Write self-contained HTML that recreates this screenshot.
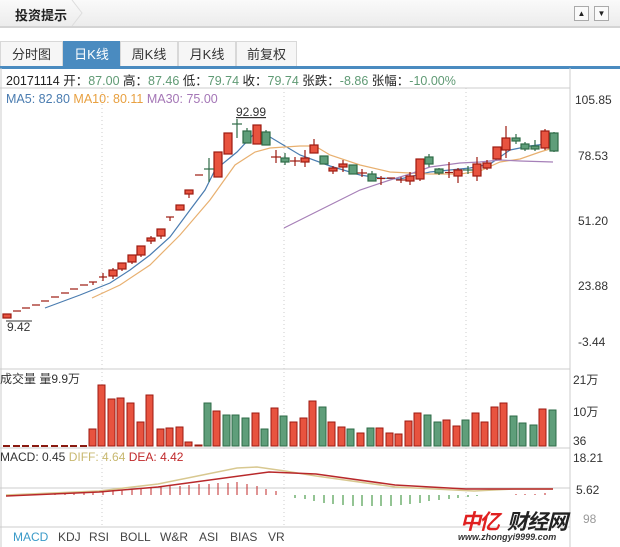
<!DOCTYPE html>
<html><head><meta charset="utf-8"><style>
body{margin:0;width:620px;height:547px;background:#fff;position:relative;overflow:hidden;font-family:"Liberation Sans","Noto Sans CJK SC",sans-serif;}
.hdr{position:absolute;left:0;top:0;width:620px;height:26px;background:linear-gradient(#fafafa,#ececec);border-bottom:2px solid #d4d4d4;}
.hdr b{position:absolute;left:15px;top:5px;font-size:13px;color:#222;}
.btn{position:absolute;top:6px;width:13px;height:13px;border:1px solid #aaa;background:#fafafa;font-size:8px;line-height:13px;text-align:center;color:#222;}
.tab{position:absolute;top:41px;height:25px;border:1px solid #d8d8d8;border-bottom:none;background:#f6f6f6;font-size:13px;color:#333;text-align:center;line-height:25px;box-sizing:border-box;}
.tab.on{background:#4a8bc0;color:#fff;border-color:#4a8bc0;}
.t{position:absolute;font-size:12.5px;white-space:nowrap;}
</style></head><body>
<div class="hdr"><b>投资提示</b>
<svg style="position:absolute;left:70px;top:0" width="14" height="26"><polyline points="2,0 12,13 2,26" fill="none" stroke="#ddd"/></svg>
<div class="btn" style="left:574px">▲</div><div class="btn" style="left:594px">▼</div></div>
<div class="tab" style="left:0;width:63px">分时图</div>
<div class="tab on" style="left:63px;width:57px">日K线</div>
<div class="tab" style="left:120px;width:58px">周K线</div>
<div class="tab" style="left:178px;width:58px">月K线</div>
<div class="tab" style="left:236px;width:61px">前复权</div>
<div style="position:absolute;left:0;top:66px;width:620px;height:3px;background:#4a8bc0"></div>
<div class="t" style="left:6px;top:70px;color:#222">20171114 开：<span style="color:#5f9a74">87.00</span> 高：<span style="color:#5f9a74">87.46</span> 低：<span style="color:#5f9a74">79.74</span> 收：<span style="color:#5f9a74">79.74</span> 张跌：<span style="color:#5f9a74">-8.86</span> 张幅：<span style="color:#5f9a74">-10.00%</span></div>
<div class="t" style="left:6px;top:92px;"><span style="color:#4a7cb0">MA5: 82.80</span> <span style="color:#e8a040">MA10: 80.11</span> <span style="color:#a476b6">MA30: 75.00</span></div>
<svg style="position:absolute;left:0;top:0" width="620" height="547">
<g stroke="#ccc" fill="none">
<line x1="1" y1="68" x2="1" y2="547"/><line x1="570" y1="68" x2="570" y2="547"/>
<line x1="0" y1="88" x2="570" y2="88"/><line x1="0" y1="369" x2="570" y2="369"/>
<line x1="0" y1="448" x2="570" y2="448"/><line x1="0" y1="488" x2="570" y2="488"/>
<line x1="0" y1="527" x2="570" y2="527"/>
<g stroke-dasharray="1,3"><line x1="102" y1="88" x2="102" y2="527"/><line x1="284" y1="88" x2="284" y2="527"/><line x1="466" y1="88" x2="466" y2="527"/></g>
</g>
<g font-size="12" fill="#333" font-family="Liberation Sans,Noto Sans CJK SC,sans-serif">
<text x="575" y="104">105.85</text><text x="578" y="160">78.53</text><text x="578" y="225">51.20</text><text x="578" y="290">23.88</text><text x="578" y="346">-3.44</text>
<text x="573" y="384">21万</text><text x="573" y="416">10万</text><text x="573" y="445">36</text>
<text x="573" y="462">18.21</text><text x="576" y="494">5.62</text><text x="583" y="523" fill="#999">98</text>
<text x="0" y="383">成交量 量9.9万</text>
<text x="0" y="461">MACD: 0.45 <tspan fill="#c8b870">DIFF: 4.64</tspan> <tspan fill="#c0282a">DEA: 4.42</tspan></text>
<text x="236" y="116" text-decoration="underline">92.99</text><text x="7" y="331">9.42</text>
<line x1="6" y1="321" x2="32" y2="321" stroke="#333"/>
</g>
<polyline fill="none" stroke="#4a7cb0" stroke-width="1.2" points="45,308 80,295 110,283 130,270 150,255 170,237 190,210 205,190 215,170 237,152 253,135 265,134 275,140 300,155 330,166 360,175 380,178 400,179 430,172 470,168 490,164 510,150 530,146 553,143"/>
<polyline fill="none" stroke="#e8b070" stroke-width="1.2" points="92,298 120,285 150,265 180,235 210,200 235,165 255,152 270,148 300,146 315,146 330,155 360,165 390,172 410,173 430,174 460,174 480,171 500,162 520,159 540,152 553,148"/>
<polyline fill="none" stroke="#a680b8" stroke-width="1.2" points="284,228 300,220 330,205 360,190 390,180 410,174 430,167 460,163 480,162 500,160 520,161 553,162"/>
<g stroke-width="1.2">
<g stroke="#9c1a10" fill="#e8533f">
<rect x="3" y="314" width="8" height="4"/>
<line x1="13" y1="311" x2="21" y2="311"/><line x1="22" y1="308" x2="30" y2="308"/><line x1="32" y1="305" x2="40" y2="305"/><line x1="41" y1="301" x2="49" y2="301"/><line x1="51" y1="297" x2="59" y2="297"/><line x1="61" y1="293" x2="69" y2="293"/><line x1="70" y1="289" x2="78" y2="289"/><line x1="80" y1="285" x2="88" y2="285"/>
<line x1="89" y1="282" x2="97" y2="282"/><line x1="93" y1="282" x2="93" y2="285"/>
<line x1="99" y1="277" x2="107" y2="277"/><line x1="103" y1="273" x2="103" y2="281"/>
<line x1="113" y1="268" x2="113" y2="279"/><rect x="109" y="270" width="8" height="6"/>
<line x1="122" y1="263" x2="122" y2="271"/><rect x="118" y="263" width="8" height="6"/>
<line x1="132" y1="255" x2="132" y2="264"/><rect x="128" y="255" width="8" height="7"/>
<line x1="141" y1="246" x2="141" y2="257"/><rect x="137" y="246" width="8" height="9"/>
<line x1="151" y1="236" x2="151" y2="244"/><rect x="147" y="238" width="8" height="3"/>
<line x1="161" y1="229" x2="161" y2="239"/><rect x="157" y="229" width="8" height="7"/>
<line x1="166" y1="217" x2="174" y2="217"/><line x1="170" y1="217" x2="170" y2="221"/>
<rect x="176" y="205" width="8" height="5"/>
<line x1="189" y1="190" x2="189" y2="198"/><rect x="185" y="190" width="8" height="4"/>
<line x1="195" y1="175" x2="203" y2="175"/>
<rect x="214" y="152" width="8" height="25"/><rect x="224" y="133" width="8" height="21"/>
<rect x="253" y="125" width="8" height="19"/>
<line x1="276" y1="150" x2="276" y2="163"/><line x1="271" y1="157" x2="281" y2="157"/>
<line x1="295" y1="157" x2="295" y2="166"/><line x1="290" y1="161" x2="300" y2="161"/>
<line x1="305" y1="150" x2="305" y2="167"/><rect x="301" y="158" width="8" height="4"/>
<line x1="314" y1="139" x2="314" y2="153"/><rect x="310" y="145" width="8" height="8"/>
<line x1="333" y1="166" x2="333" y2="174"/><rect x="329" y="168" width="8" height="3"/>
<line x1="343" y1="160" x2="343" y2="172"/><rect x="339" y="164" width="8" height="3"/>
<line x1="362" y1="169" x2="362" y2="177"/><line x1="357" y1="173" x2="367" y2="173"/>
<line x1="381" y1="176" x2="381" y2="185"/><line x1="377" y1="178.5" x2="385" y2="178.5"/>
<line x1="387" y1="178" x2="395" y2="178"/>
<line x1="401" y1="177" x2="401" y2="183"/><line x1="396" y1="180" x2="406" y2="180"/>
<line x1="410" y1="172" x2="410" y2="185"/><rect x="406" y="176" width="8" height="5"/>
<line x1="420" y1="159" x2="420" y2="181"/><rect x="416" y="159" width="8" height="20"/>
<line x1="449" y1="162" x2="449" y2="178"/><line x1="445" y1="172.5" x2="453" y2="172.5"/>
<line x1="458" y1="168" x2="458" y2="183"/><rect x="454" y="170" width="8" height="6"/>
<line x1="477" y1="157" x2="477" y2="181"/><rect x="473" y="164" width="8" height="12"/>
<line x1="487" y1="160" x2="487" y2="170"/><rect x="483" y="163" width="8" height="5"/>
<rect x="493" y="147" width="8" height="12"/>
<line x1="506" y1="126" x2="506" y2="158"/><rect x="502" y="138" width="8" height="12"/>
<line x1="545" y1="129" x2="545" y2="150"/><rect x="541" y="131" width="8" height="17"/>
</g>
<g stroke="#2e6b47" fill="#5f9e7a">
<line x1="209" y1="158" x2="209" y2="182"/><line x1="204" y1="169" x2="214" y2="169"/>
<line x1="237" y1="119" x2="237" y2="138"/><line x1="232" y1="124" x2="242" y2="124"/>
<line x1="247" y1="128" x2="247" y2="143"/><rect x="243" y="131" width="8" height="12"/>
<line x1="266" y1="130" x2="266" y2="145"/><rect x="262" y="132" width="8" height="13"/>
<line x1="285" y1="153" x2="285" y2="165"/><rect x="281" y="158" width="8" height="4"/>
<rect x="320" y="156" width="8" height="8"/>
<rect x="349" y="165" width="8" height="9"/>
<line x1="372" y1="171" x2="372" y2="181"/><rect x="368" y="174" width="8" height="7"/>
<line x1="429" y1="154" x2="429" y2="167"/><rect x="425" y="157" width="8" height="7"/>
<line x1="439" y1="168" x2="439" y2="175"/><rect x="435" y="169" width="8" height="4"/>
<line x1="468" y1="166" x2="468" y2="174"/><line x1="463" y1="170" x2="473" y2="170"/>
<line x1="516" y1="134" x2="516" y2="144"/><rect x="512" y="138" width="8" height="3"/>
<line x1="525" y1="142" x2="525" y2="151"/><rect x="521" y="144" width="8" height="5"/>
<line x1="535" y1="140" x2="535" y2="151"/><rect x="531" y="146" width="8" height="3"/>
<line x1="554" y1="132" x2="554" y2="152"/><rect x="550" y="133" width="8" height="18"/>
</g>
</g>
<g stroke="#8a1a10" stroke-width="2"><line x1="3" y1="446" x2="10" y2="446"/><line x1="13" y1="446" x2="20" y2="446"/><line x1="22" y1="446" x2="29" y2="446"/><line x1="32" y1="446" x2="39" y2="446"/><line x1="41" y1="446" x2="48" y2="446"/><line x1="51" y1="446" x2="58" y2="446"/><line x1="61" y1="446" x2="68" y2="446"/><line x1="70" y1="446" x2="77" y2="446"/><line x1="80" y1="446" x2="87" y2="446"/></g>
<g stroke-width="1">
<g fill="#e8533f" stroke="#9c1a10">
<rect x="89" y="429" width="7" height="17"/><rect x="98" y="385" width="7" height="61"/><rect x="108" y="399" width="7" height="47"/><rect x="117" y="398" width="7" height="48"/><rect x="127" y="403" width="7" height="43"/><rect x="137" y="422" width="7" height="24"/><rect x="146" y="395" width="7" height="51"/><rect x="157" y="429" width="7" height="17"/><rect x="166" y="428" width="7" height="18"/><rect x="176" y="427" width="7" height="19"/><rect x="185" y="442" width="7" height="4"/><rect x="195" y="445" width="7" height="1"/>
<rect x="213" y="411" width="7" height="35"/><rect x="252" y="413" width="7" height="33"/><rect x="271" y="408" width="7" height="38"/><rect x="290" y="422" width="7" height="24"/><rect x="300" y="418" width="7" height="28"/><rect x="309" y="401" width="7" height="45"/><rect x="328" y="422" width="7" height="24"/><rect x="338" y="427" width="7" height="19"/><rect x="357" y="433" width="7" height="13"/><rect x="376" y="428" width="7" height="18"/><rect x="386" y="433" width="7" height="13"/><rect x="395" y="434" width="7" height="12"/><rect x="405" y="421" width="7" height="25"/><rect x="414" y="413" width="7" height="33"/><rect x="443" y="420" width="7" height="26"/><rect x="453" y="426" width="7" height="20"/><rect x="472" y="413" width="7" height="33"/><rect x="481" y="422" width="7" height="24"/><rect x="491" y="407" width="7" height="39"/><rect x="500" y="403" width="7" height="43"/><rect x="539" y="409" width="7" height="37"/>
</g>
<g fill="#5f9e7a" stroke="#2e6b47">
<rect x="204" y="403" width="7" height="43"/><rect x="223" y="415" width="7" height="31"/><rect x="232" y="415" width="7" height="31"/><rect x="242" y="418" width="7" height="28"/><rect x="261" y="429" width="7" height="17"/><rect x="280" y="416" width="7" height="30"/><rect x="319" y="407" width="7" height="39"/><rect x="347" y="429" width="7" height="17"/><rect x="367" y="428" width="7" height="18"/><rect x="424" y="415" width="7" height="31"/><rect x="434" y="422" width="7" height="24"/><rect x="462" y="420" width="7" height="26"/><rect x="510" y="416" width="7" height="30"/><rect x="519" y="423" width="7" height="23"/><rect x="530" y="425" width="7" height="21"/><rect x="549" y="410" width="7" height="36"/>
</g></g>
<g stroke="#c0282a" stroke-width="1">
<line x1="45" y1="495" x2="45" y2="494"/><line x1="55" y1="495" x2="55" y2="493"/><line x1="65" y1="495" x2="65" y2="493"/><line x1="74" y1="495" x2="74" y2="492"/><line x1="84" y1="495" x2="84" y2="492"/><line x1="93" y1="495" x2="93" y2="491"/><line x1="103" y1="495" x2="103" y2="491"/><line x1="113" y1="495" x2="113" y2="490"/><line x1="122" y1="495" x2="122" y2="490"/><line x1="132" y1="495" x2="132" y2="489"/><line x1="141" y1="495" x2="141" y2="489"/><line x1="151" y1="495" x2="151" y2="488"/><line x1="161" y1="495" x2="161" y2="487"/><line x1="170" y1="495" x2="170" y2="486"/><line x1="180" y1="495" x2="180" y2="486"/><line x1="189" y1="495" x2="189" y2="485"/><line x1="199" y1="495" x2="199" y2="484"/><line x1="209" y1="495" x2="209" y2="484"/><line x1="218" y1="495" x2="218" y2="483"/><line x1="228" y1="495" x2="228" y2="483"/><line x1="237" y1="495" x2="237" y2="482"/><line x1="247" y1="495" x2="247" y2="484"/><line x1="257" y1="495" x2="257" y2="486"/><line x1="266" y1="495" x2="266" y2="489"/><line x1="276" y1="495" x2="276" y2="491"/>
<line x1="516" y1="495" x2="516" y2="494"/><line x1="525" y1="495" x2="525" y2="494"/><line x1="535" y1="495" x2="535" y2="494"/><line x1="545" y1="495" x2="545" y2="493"/>
</g>
<g stroke="#2a8a2a" stroke-width="1">
<line x1="295" y1="495" x2="295" y2="498"/><line x1="305" y1="495" x2="305" y2="499"/><line x1="314" y1="495" x2="314" y2="501"/><line x1="324" y1="495" x2="324" y2="503"/><line x1="333" y1="495" x2="333" y2="504"/><line x1="343" y1="495" x2="343" y2="505"/><line x1="353" y1="495" x2="353" y2="506"/><line x1="362" y1="495" x2="362" y2="506"/><line x1="372" y1="495" x2="372" y2="506"/><line x1="381" y1="495" x2="381" y2="506"/><line x1="391" y1="495" x2="391" y2="506"/><line x1="401" y1="495" x2="401" y2="505"/><line x1="410" y1="495" x2="410" y2="504"/><line x1="420" y1="495" x2="420" y2="503"/><line x1="429" y1="495" x2="429" y2="501"/><line x1="439" y1="495" x2="439" y2="500"/><line x1="449" y1="495" x2="449" y2="499"/><line x1="458" y1="495" x2="458" y2="498"/><line x1="468" y1="495" x2="468" y2="497"/><line x1="477" y1="495" x2="477" y2="496"/>
</g>
<polyline fill="none" stroke="#d8c890" stroke-width="1.5" points="6,495 99,491 158,484 237,468 257,467 285,471 316,476 395,487 474,491 514,489 553,489"/>
<polyline fill="none" stroke="#b8282a" stroke-width="1.5" points="6,496 99,492 158,487 269,472 316,474 395,485 466,489 553,489"/>
<g font-family="Liberation Sans,Noto Sans CJK SC,sans-serif" font-size="12" fill="#444">
<text x="13" y="541" fill="#3a9ac8">MACD</text><text x="58" y="541">KDJ</text><text x="89" y="541">RSI</text><text x="120" y="541">BOLL</text><text x="160" y="541">W&amp;R</text><text x="199" y="541">ASI</text><text x="230" y="541">BIAS</text><text x="268" y="541">VR</text>
</g>
<g font-family="Liberation Sans,Noto Sans CJK SC,sans-serif" font-weight="bold" font-style="italic">
<text x="460" y="529" font-size="21" fill="#e02020" letter-spacing="-2">中亿</text><text x="507" y="529" font-size="21" fill="#222" letter-spacing="-1">财经网</text>
<text x="458" y="540" font-size="9" fill="#333">www.zhongyi9999.com</text>
</g>
</svg>
</body></html>
